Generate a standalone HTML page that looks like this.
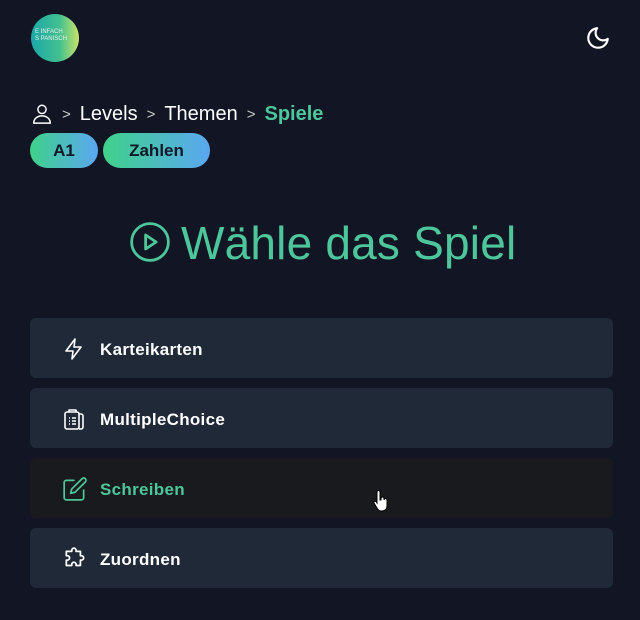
<!DOCTYPE html>
<html><head><meta charset="utf-8"><style>
*{margin:0;padding:0;box-sizing:border-box}
body{width:640px;height:620px;background:#121624;font-family:"Liberation Sans",sans-serif;color:#fff;position:relative;overflow:hidden}
.logo{position:absolute;left:31px;top:14px;width:48px;height:48px;border-radius:50%;background:linear-gradient(90deg,#1aa7a8,#43c08f 60%,#c9e36a);font-size:6px;color:#eee;padding:15px 0 0 4px;line-height:7px}
.crumb{position:absolute;top:102px;left:31px;display:flex;align-items:center;font-size:20px}
.crumb .sep{color:#ccc;font-size:15px;margin:0 9px}
.pill{position:absolute;top:133px;height:35px;border-radius:18px;background:linear-gradient(90deg,#3fd18a,#5aa7f0);color:#111827;font-weight:bold;font-size:17px;display:flex;align-items:center;justify-content:center}
h1{position:absolute;top:216px;left:181px;font-size:46px;font-weight:normal;color:#4cc69a;letter-spacing:0.2px;white-space:nowrap}
.card{position:absolute;left:30px;width:583px;height:60px;border-radius:6px;background:#1f2937;display:flex;align-items:center;padding:4px 0 0 70px;font-weight:bold;font-size:17px;letter-spacing:0.3px}
.card svg{position:absolute;left:32px;top:18px}
</style></head><body>
<div class="logo">E INFACH<br>S PANISCH</div>
<svg style="position:absolute;left:585px;top:25px" width="26" height="26" viewBox="0 0 24 24" fill="none" stroke="#fff" stroke-width="2" stroke-linecap="round" stroke-linejoin="round"><path d="M21 12.8A9 9 0 1 1 11.2 3a7 7 0 0 0 9.8 9.8z"/></svg>
<div class="crumb">
<svg width="22" height="24" viewBox="0 0 24 24" fill="none" stroke="#fff" stroke-width="1.6"><circle cx="12" cy="7" r="4.5"/><path d="M3 22c0-5 4-8 9-8s9 3 9 8z"/></svg>
<span class="sep">&gt;</span><span>Levels</span><span class="sep">&gt;</span><span>Themen</span><span class="sep">&gt;</span><span style="color:#4cc69a;font-weight:bold">Spiele</span></div>
<div class="pill" style="left:30px;width:68px">A1</div>
<div class="pill" style="left:103px;width:107px">Zahlen</div>
<svg style="position:absolute;left:129px;top:221px" width="42" height="42" viewBox="0 0 24 24" fill="none" stroke="#4cc69a" stroke-width="1.6" stroke-linejoin="round"><circle cx="12" cy="12" r="10.5"/><path d="M9.5 8v8l6-4z"/></svg>
<h1>Wähle das Spiel</h1>
<div class="card" style="top:318px"><svg width="24" height="26" viewBox="0 0 24 24" fill="none" stroke="#fff" stroke-width="1.6" stroke-linejoin="round"><path d="M13 2L4 14h7l-1 8 9-12h-7z"/></svg>Karteikarten</div>
<div class="card" style="top:388px"><svg width="24" height="26" viewBox="0 0 24 24" fill="none" stroke="#fff" stroke-width="1.6" stroke-linejoin="round"><rect x="3" y="5" width="14" height="17" rx="2"/><path d="M7 5V3h7v2M17 7h2a2 2 0 0 1 2 2v11a2 2 0 0 1-2 2h-2M7 11h1M10 11h4M7 14h1M10 14h4M7 17h1M10 17h4"/></svg>MultipleChoice</div>
<div class="card" style="top:458px;background:#191a1e;color:#4cc69a"><svg width="26" height="26" viewBox="0 0 24 24" fill="none" stroke="#4cc69a" stroke-width="1.6" stroke-linejoin="round" stroke-linecap="round"><path d="M11 4H4a2 2 0 0 0-2 2v14a2 2 0 0 0 2 2h14a2 2 0 0 0 2-2v-7"/><path d="M18.5 2.5a2.1 2.1 0 0 1 3 3L12 15l-4 1 1-4z"/></svg>Schreiben</div>
<div class="card" style="top:528px"><svg width="26" height="26" viewBox="0 0 24 24" fill="none" stroke="#fff" stroke-width="1.6" stroke-linejoin="round"><path d="M9 4a2 2 0 0 1 4 0v1h4v4h1a2 2 0 0 1 0 4h-1v5h-4v-1a2 2 0 0 0-4 0v1H4v-5h1a2 2 0 0 0 0-4H4V5h5z"/></svg>Zuordnen</div>
<svg style="position:absolute;left:373px;top:490px" width="16" height="24" viewBox="0 0 16 24"><path d="M4 2a1.5 1.5 0 0 1 3 0v8h1V8.5a1.5 1.5 0 0 1 3 0V10a1.5 1.5 0 0 1 3 0v6c0 3-2 5-5 5H8c-2 0-3-1-4-3l-3-5a1.3 1.3 0 0 1 2-1.5L4 13z" fill="#fff" stroke="#000" stroke-width="1"/></svg>
</body></html>
